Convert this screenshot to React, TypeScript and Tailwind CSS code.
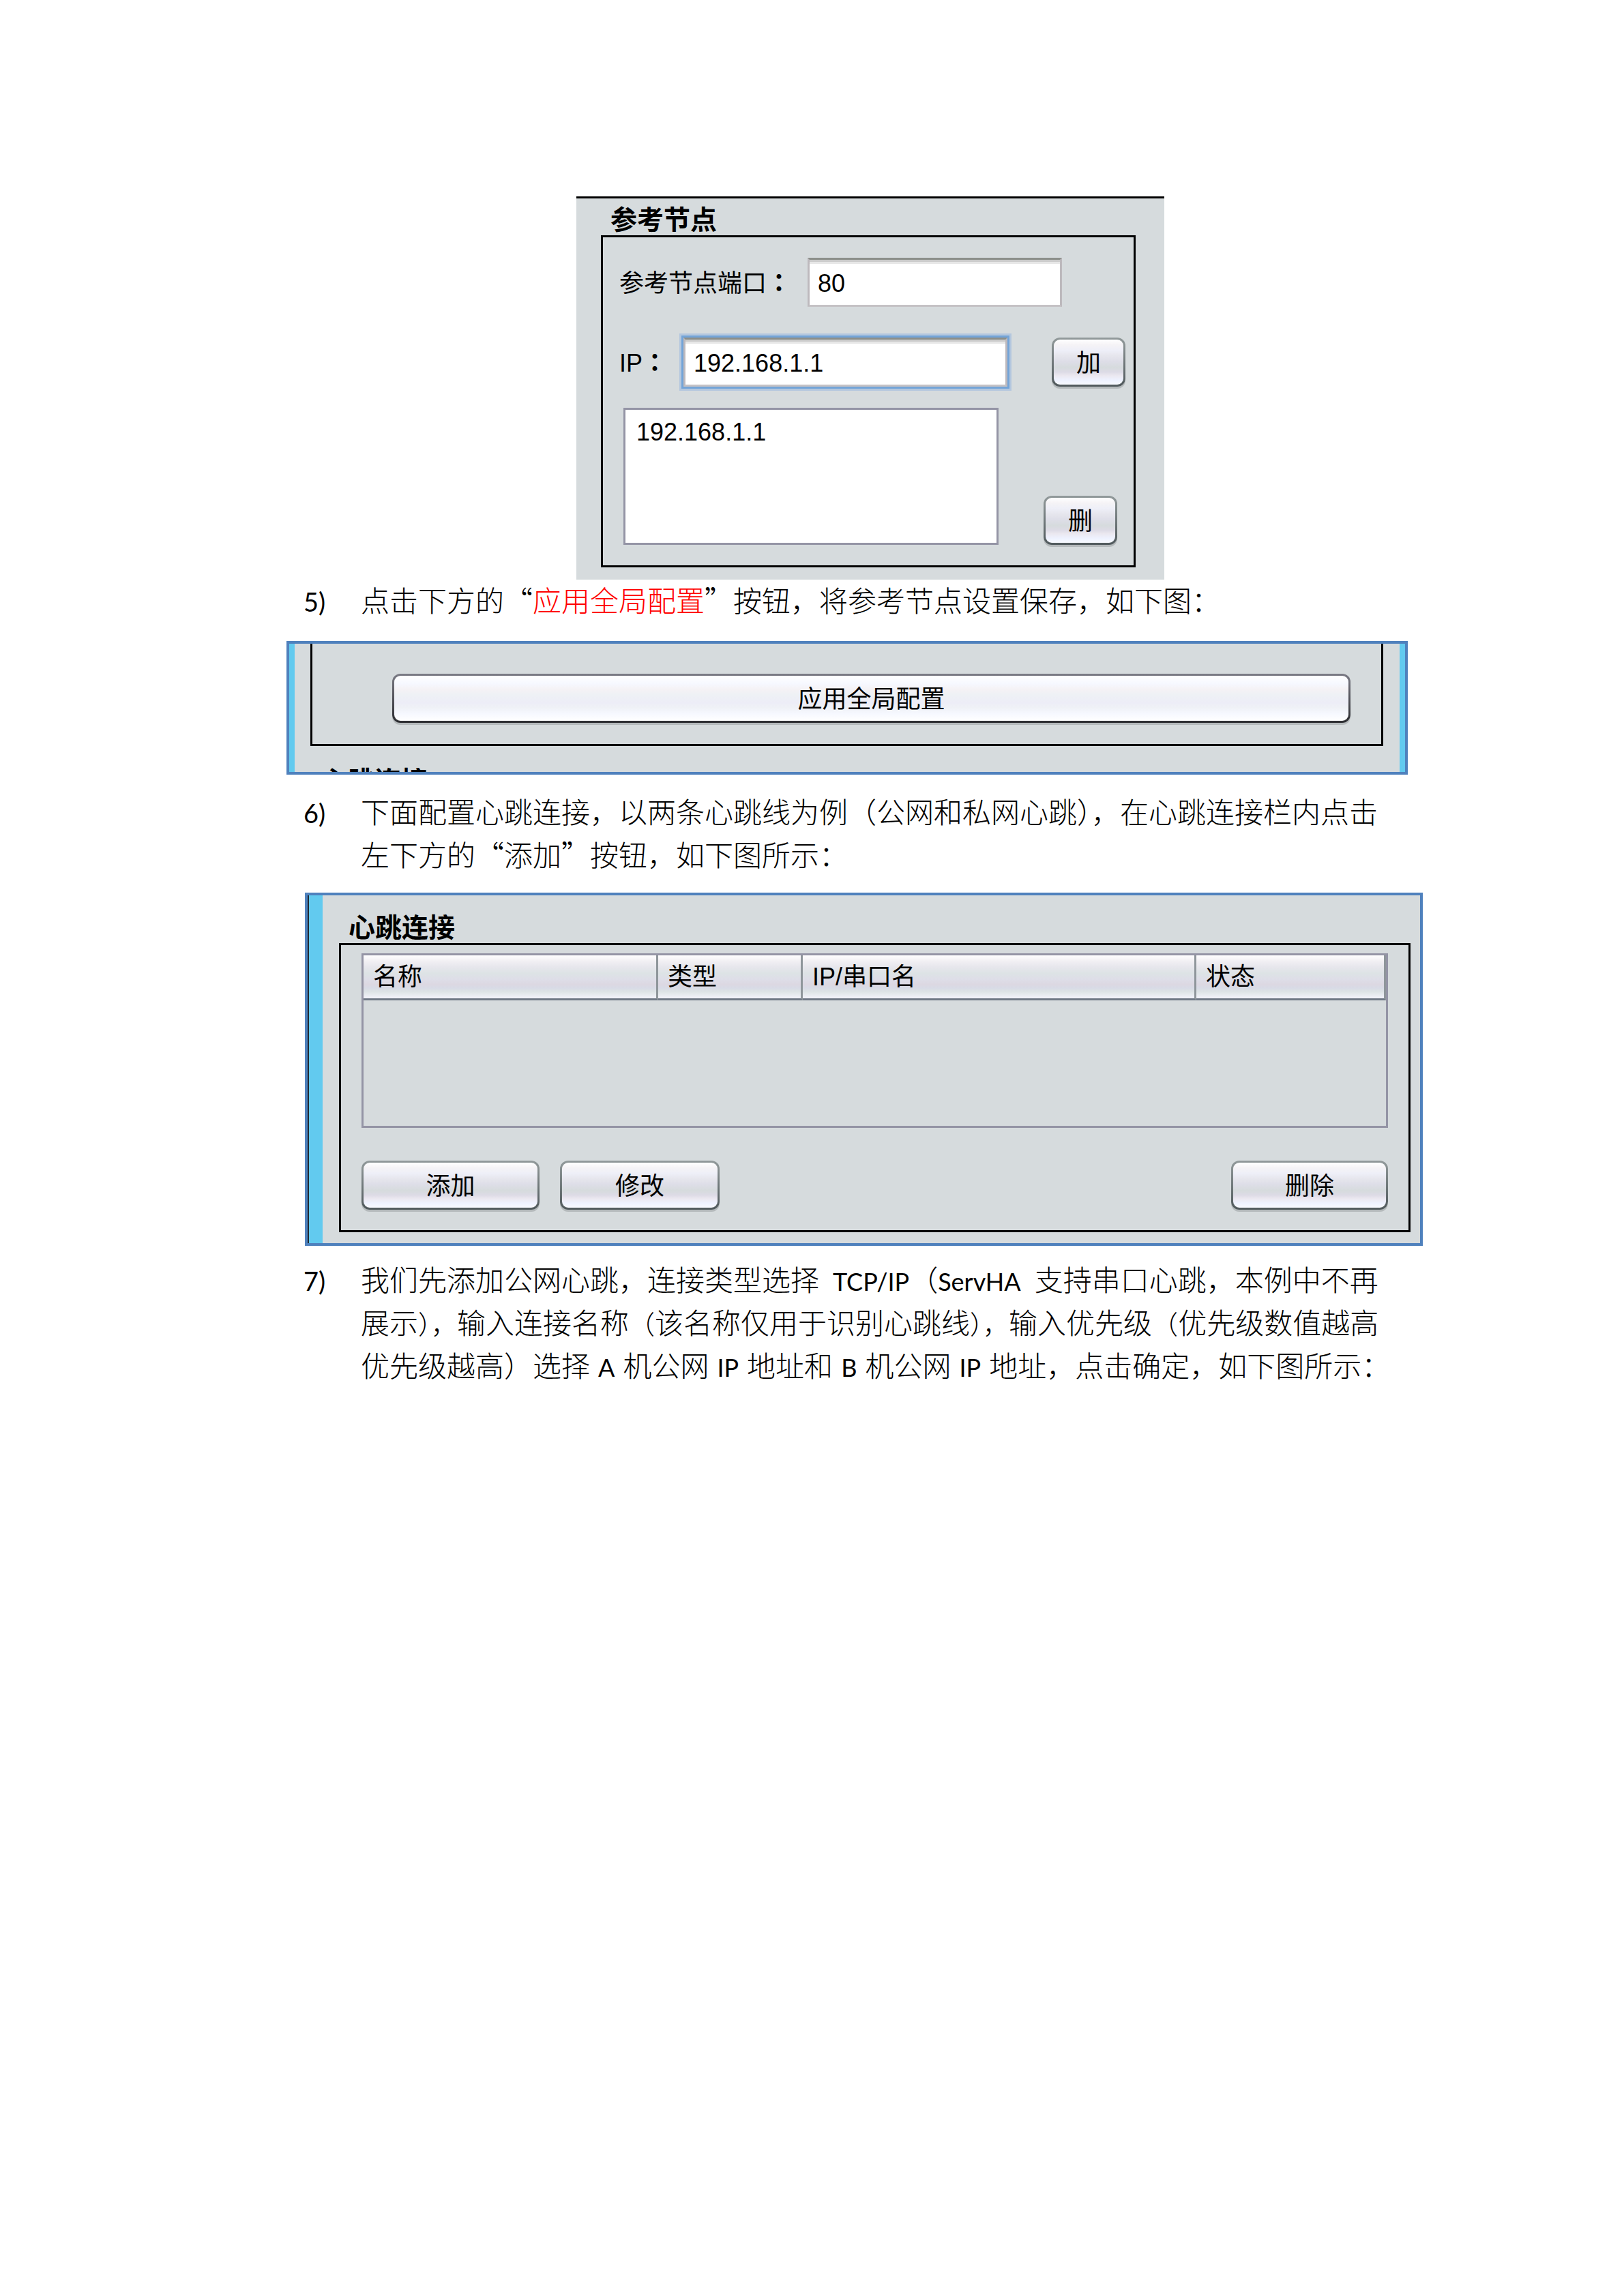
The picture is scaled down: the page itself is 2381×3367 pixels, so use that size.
import { useState } from "react";
import type { ReactNode } from "react";

const columns = [
    { label: "名称", width: "w-[432px]" },
    { label: "类型", width: "w-[212px]" },
    { label: "IP/串口名", width: "w-auto" },
    { label: "状态", width: "w-[278px]" },
];

const field =
    "h-[72px] border-[3px] border-t-[#8c8f8a] border-x-[#bdb9bd] border-b-[#c5c2c5] bg-white bg-[linear-gradient(#cbcbcb_3px,#e7e7e7_3px,#e7e7e7_6px,#fff_6px)] pt-1 pl-3 text-black outline-none";

function Latin({ wide, tight, children }: { wide?: boolean; tight?: boolean; children: ReactNode }) {
    const gap = wide ? "ml-5" : tight ? "mr-5" : "mx-3";
    return <span className={`font-['Lato',sans-serif] text-[36px] leading-none font-normal ${gap}`}>{children}</span>;
}

function Punct({ children }: { children: ReactNode }) {
    return <span className="text-[38px] leading-none">{children}</span>;
}

function SwingButton({ primary, className, children }: { primary?: boolean; className: string; children: ReactNode }) {
    const skin = primary
        ? "[background:linear-gradient(#fff,#f6f8ff_18%,#f5f2f5_30%,#eef1f5_42%,#ededf7_60%,#eff1f6_70%,#f6f8ff_84%,#fff)_padding-box,linear-gradient(#7b7b85,#2b2c30)_border-box]"
        : "[background:linear-gradient(#fff,#f5f3f6_12%,#eeeff8_24%,#e6e6ed_36%,#dedee8_48%,#d6dbdd_62%,#dddbe6_72%,#ebe8f0_80%,#eef2ff_90%,#f8faff)_padding-box,linear-gradient(#929a9b,#50595c)_border-box]";
    return (
        <button
            type="button"
            className={`h-[72px] rounded-xl border-[3px] border-transparent pt-1 text-center leading-none text-black shadow-[0_3px_0_#b4b9bb] ${skin} ${className}`}
        >
            {children}
        </button>
    );
}

function GroupTitle({ children }: { children: ReactNode }) {
    return <h2 className="pt-1.5 text-[39px] leading-[44px] font-bold">{children}</h2>;
}

function Colon() {
    return (
        <span lang="ja" className="font-['Noto_Sans_CJK_JP',sans-serif] font-bold">
            ：
        </span>
    );
}

function Step({ no, children }: { no: number; children: ReactNode }) {
    return (
        <div className="flex items-baseline pl-[25px] font-['Noto_Sans_CJK_SC',sans-serif] text-[42px] leading-[63px] font-light">
            <span className="w-[84px] shrink-0 font-['Lato',sans-serif] text-[38px] leading-none font-normal">{no})</span>
            <div className="whitespace-nowrap">{children}</div>
        </div>
    );
}

function ReferenceNode() {
    const [port, setPort] = useState("80");
    const [ip, setIp] = useState("192.168.1.1");

    return (
        <section className="-mb-[3px] ml-[425px] max-w-[862px] border-t-[3px] border-black bg-[#d6dbdd] pt-1 pr-[42px] pb-[18px] pl-9">
            <div className="pl-[14px]">
                <GroupTitle>参考节点</GroupTitle>
            </div>
            <div className="border-[3px] border-black py-[30px]">
                <div className="flex items-center gap-6 pl-6">
                    <label htmlFor="port" className="shrink-0">
                        参考节点端口
                        <Colon />
                    </label>
                    <input
                        id="port"
                        value={port}
                        onChange={(e) => setPort(e.target.value)}
                        className={`w-[373px] ${field}`}
                    />
                </div>
                <div className="mt-[45px] flex items-center justify-between pr-3 pl-6">
                    <div className="flex items-center gap-6">
                        <label htmlFor="ip" className="shrink-0">
                            IP
                            <Colon />
                        </label>
                        <input
                            id="ip"
                            value={ip}
                            onChange={(e) => setIp(e.target.value)}
                            className={`w-[475px] shadow-[0_0_0_3px_#73a4d8,0_0_0_6px_#b4c7de] ${field}`}
                        />
                    </div>
                    <SwingButton className="w-[108px]">加</SwingButton>
                </div>
                <div className="mt-[31px] flex items-end justify-between pr-6 pl-[30px]">
                    <select
                        size={4}
                        aria-label="IP"
                        className="h-[201px] w-[550px] appearance-none overflow-hidden border-[3px] border-[#9494a5] bg-white pt-3 outline-none"
                    >
                        <option className="pl-4 leading-[50px]">192.168.1.1</option>
                    </select>
                    <SwingButton className="w-[108px]">删</SwingButton>
                </div>
            </div>
        </section>
    );
}

function ApplyGlobal() {
    return (
        <section className="mt-[30px] mr-[22px] mb-[21px] border-4 border-[#4f81bd]">
            <div className="border-x-8 border-[#62caef] bg-[#d6dbdd]">
                <div className="mr-6 ml-[23px] flex border-x-[3px] border-b-[3px] border-black pt-11 pr-[45px] pb-[31px] pl-[117px]">
                    <SwingButton primary className="flex-1">
                        应用全局配置
                    </SwingButton>
                </div>
                {/* the next group's heading is cut off by the lower edge */}
                <div className="h-[38px] overflow-hidden pt-6 pl-[39px]">
                    <GroupTitle>心跳连接</GroupTitle>
                </div>
            </div>
        </section>
    );
}

function Heartbeat() {
    return (
        <section className="mt-[26px] mb-4 ml-[27px] border-4 border-[#4f81bd]">
            <div className="border-l-2 border-[#222b33]">
                <div className="border-l-[20px] border-[#62caef] bg-[#d6dbdd] pt-5 pr-[14px] pb-4 pl-6">
                    <div className="pl-[14px]">
                        <GroupTitle>心跳连接</GroupTitle>
                    </div>
                    <div className="border-[3px] border-black px-[30px] pt-3 pb-[30px]">
                        <div className="h-[256px] border-[3px] border-[#9494a5]">
                            <table className="w-full table-fixed border-separate border-spacing-0">
                                <thead>
                                    <tr>
                                        {columns.map((c) => (
                                            <th
                                                key={c.label}
                                                className={`h-[66px] border-r-[3px] border-b-[3px] border-r-[#8f969b] border-b-[#6f7885] bg-[linear-gradient(#fff,#f1eff3_14%,#e6e6ec_28%,#dde3e5_42%,#dedee8_55%,#dcd8e2_68%,#d8dbe6_76%,#dde3e5_84%,#f3f3fb)] p-0 pl-[14px] text-left leading-none font-normal ${c.width}`}
                                            >
                                                {c.label}
                                            </th>
                                        ))}
                                    </tr>
                                </thead>
                            </table>
                        </div>
                        <div className="mt-12 flex gap-[30px]">
                            <SwingButton className="w-[261px]">添加</SwingButton>
                            <SwingButton className="w-[234px]">修改</SwingButton>
                            <SwingButton className="ml-auto w-[230px]">删除</SwingButton>
                        </div>
                    </div>
                </div>
            </div>
        </section>
    );
}

export default function App() {
    return (
        <main
            lang="zh-CN"
            className="min-h-screen bg-white pt-[288px] pr-[295px] pl-[420px] font-['Liberation_Sans','Noto_Sans_CJK_SC',sans-serif] text-[36px] leading-[50px] text-black"
        >
            <ReferenceNode />

            <Step no={5}>
                点击下方的“<span className="text-[#ff0000]">应用全局配置</span>”按钮，将参考节点设置保存，如下图：
            </Step>

            <ApplyGlobal />

            <Step no={6}>
                下面配置心跳连接，以两条心跳线为例（公网和私网心跳），在心跳连接栏内点击
                <br />
                左下方的“添加”按钮，如下图所示：
            </Step>

            <Heartbeat />

            <Step no={7}>
                我们先添加公网心跳，连接类型选择<Latin wide>TCP/IP</Latin>（<Latin tight>ServHA</Latin>
                支持串口心跳，本例中不再
                <br />
                展示<Punct>），</Punct>输入连接名称<Punct>（</Punct>该名称仅用于识别心跳线<Punct>），</Punct>
                输入优先级<Punct>（</Punct>优先级数值越高
                <br />
                优先级越高）选择<Latin>A</Latin>机公网<Latin>IP</Latin>地址和<Latin>B</Latin>机公网<Latin>IP</Latin>
                地址，点击确定，如下图所示：
            </Step>
        </main>
    );
}
